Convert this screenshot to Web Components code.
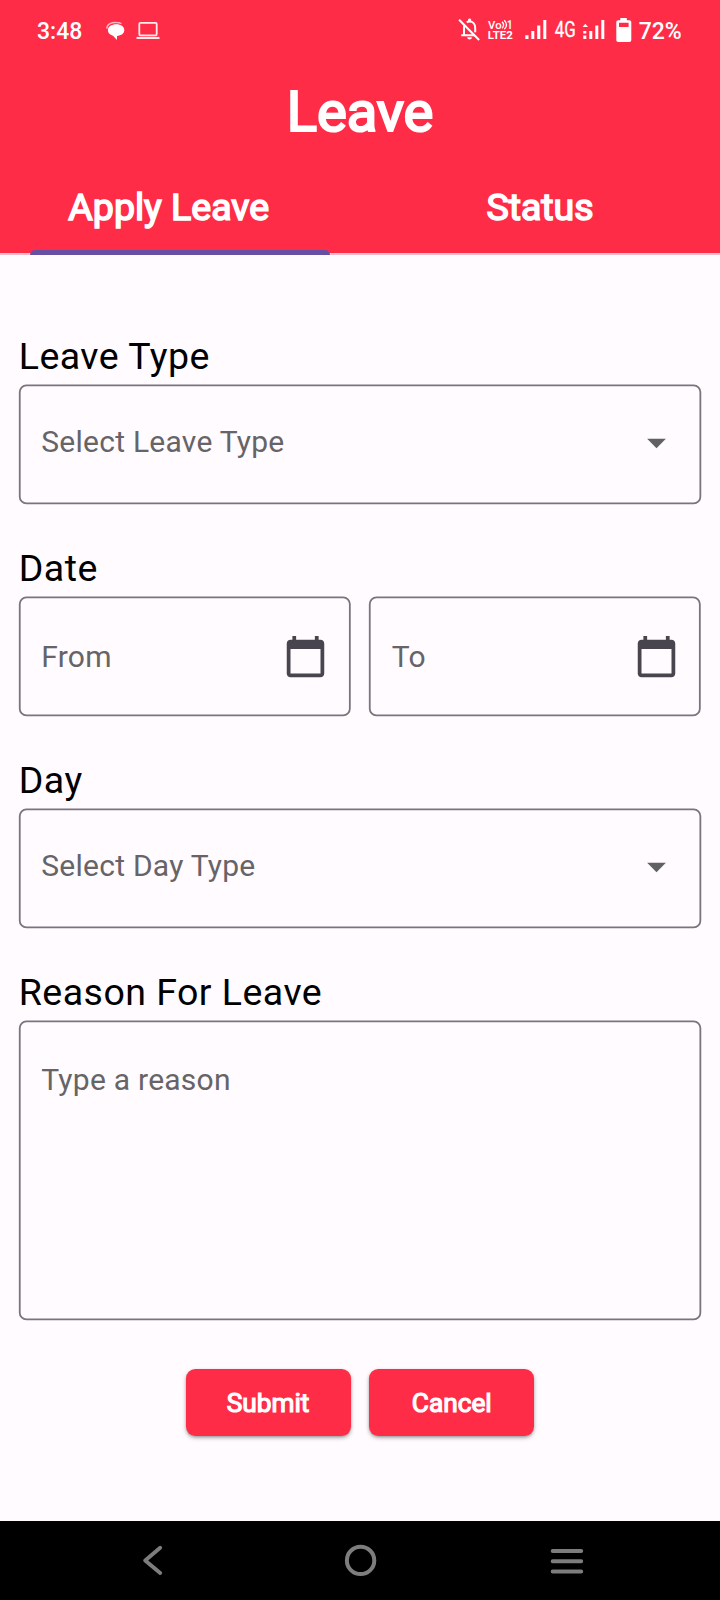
<!DOCTYPE html>
<html lang="en">
<head>
<meta charset="utf-8">
<title>Leave</title>
<style>
html,body{margin:0;padding:0}
body{font-family:Roboto,"Liberation Sans",sans-serif;background:#fffbff}
</style>
</head>
<body>
<leave-app></leave-app>
<script>
const define=(name,html)=>customElements.define(name,class extends HTMLElement{
  constructor(){super();this.attachShadow({mode:'open'}).innerHTML=typeof html==='function'?html(this):html;}
});

define('status-bar',`<style>
:host{display:flex;align-items:center;height:60px;box-sizing:border-box;padding-left:37px;color:#fff;font-size:23px;font-weight:500;line-height:27px}
svg{display:block;flex:none;height:60px}
.time{width:66px;padding-top:2px}
.end{margin-left:auto;display:flex;align-items:center;padding-right:38.3px}
.pct{width:43px;white-space:nowrap;padding-top:2px}
</style>
<span class="time">3:48</span>
<svg width="60" viewBox="103 0 60 60" fill="#fff">
 <path d="M106.8 28.6c.2-4.600 5-6.400 9.600-6.100 2.300 0 4 .6 5 1.300" fill="none" stroke="#fff" stroke-opacity=".65" stroke-width="1.400"/>
 <path d="M116.300 24.300c4.700 0 8 2.200 8 5.800 0 3.600-3.100 5.500-7.300 6v4l-4-4.300c-3.500-.8-5.100-3-5.100-5.700 0-3.600 3.700-5.800 8.400-5.800z"/>
 <rect x="139.300" y="22.900" width="17.400" height="12.400" rx="1" fill="none" stroke="#fff" stroke-opacity=".9" stroke-width="1.800"/>
 <path d="M136.500 36.900h23v2.100h-23z" fill-opacity=".9"/>
</svg>
<div class="end">
<svg width="181" viewBox="457.700 0 181 60" fill="#fff">
 <g fill="none" stroke="#fff" stroke-width="2">
  <path d="M458.800 19.700l20 20.300"/>
  <path d="M463.700 35V28c0-1.200.2-2.300.7-3.200M466.400 22.400c.8-.6 1.700-.9 2.900-.9 3.600 0 5.600 2.900 5.600 6.500v4.300M461 35.200h13.300"/>
 </g>
 <path d="M467.700 21v-1c0-2 3.200-2 3.200 0v1zM467 37.200h4.600c0 3-4.600 3-4.600 0z"/>
 <g font-family="Roboto,sans-serif" font-weight="700">
  <text x="487.800" y="28.500" font-size="11.500" font-weight="500" textLength="13.500" lengthAdjust="spacingAndGlyphs">Vo</text>
  <text x="506.700" y="28.500" font-size="12" textLength="5.500" lengthAdjust="spacingAndGlyphs">1</text>
  <text x="487.500" y="38.900" font-size="11.200" textLength="25" lengthAdjust="spacingAndGlyphs">LTE2</text>
 </g>
 <path d="M501.800 21.700q3 3.300 0 6.600M504 20.200q4.400 4.800 0 9" fill="none" stroke="#fff" stroke-width="1.300"/>
 <path d="M525 35.200h3.200V39H525zM531 31h3v8h-3zM536.900 25.500h3.100V39h-3.100zM543 20h3v19h-3z"/>
 <text x="554.500" y="37.100" font-family="Roboto,sans-serif" font-size="22" font-weight="400" stroke="#fff" stroke-width=".3" textLength="21" lengthAdjust="spacingAndGlyphs">4G</text>
 <path d="M582.300 27l2.700-3.200 2.700 3.200zM583 30.900h3v2.700h-3zM583 35.600h3V39h-3zM589 31h3v8h-3zM595 25.500h3V39h-3zM601 20h3v19h-3z"/>
 <path fill-rule="evenodd" d="M620 18h6.500v2.200h2.500c1.200 0 2 .8 2 2V40c0 1.200-.8 2-2 2h-11c-1.200 0-2-.8-2-2V22.200c0-1.200.8-2 2-2h2zM618.700 22.800V27h9.600v-4.200z"/>
</svg>
<span class="pct">72%</span>
</div>`);

define('tab-item',`<style>
:host{flex:1;display:flex;flex-direction:column;align-items:center;justify-content:space-between;height:70px;box-sizing:border-box;color:#fff;font-size:37.500px;line-height:44px}
span{-webkit-text-stroke:1.600px #fff;padding-right:var(--trail,0px);white-space:nowrap}
i{display:block;width:300px;height:5.500px;border-radius:5px 5px 0 0;background:transparent}
:host([selected]) i{background:#6750a4}
</style><span><slot></slot></span><i></i>`);

define('app-header',`<style>
:host{display:block;height:254.500px;background:linear-gradient(#ff2c48 0 253px,#f6bcc9 253px)}
h1{margin:0;height:105px;line-height:105px;text-align:center;color:#fff;font-size:56.250px;font-weight:400;-webkit-text-stroke:2.200px #fff;letter-spacing:-.1px}
nav{display:flex;padding-top:20px}
</style>
<status-bar></status-bar>
<h1>Leave</h1>
<nav><tab-item selected style="--trail:22.500px">Apply Leave</tab-item><tab-item>Status</tab-item></nav>`);

define('form-group',el=>`<style>
:host{display:flex;flex-direction:column;gap:6.700px}
label{font-size:37.500px;line-height:44px;letter-spacing:.47px;color:#000;white-space:nowrap}
.row{display:flex;gap:18.750px}
</style><label>${el.getAttribute('label')}</label><div class="row"><slot></slot></div>`);

const icons={
  arrow:'<path d="M7 10l5 5 5-5z" fill="#616161"/>',
  calendar:'<path fill="#49454f" d="M20 3h-1V1h-2v2H7V1H5v2H4c-1.100 0-2 .9-2 2v16c0 1.100.9 2 2 2h16c1.100 0 2-.9 2-2V5c0-1.100-.9-2-2-2zm0 18H4V8h16v13z"/>'
};
define('outlined-field',el=>{
  const icon=icons[el.getAttribute('icon')];
  return `<style>
:host{position:relative;flex:1;display:flex;align-items:center;justify-content:space-between;height:119.500px;box-sizing:border-box;padding:0 22.500px;color:#666467;font-size:30px;line-height:35px;letter-spacing:.25px}
:host([icon=arrow]){padding-bottom:4.500px}
:host([icon=arrow]) span{padding-bottom:2px}
:host([multiline]){height:299.500px;align-items:flex-start;padding-top:41px}
.frame{position:absolute;inset:0;width:100%;height:100%;overflow:visible}
.frame rect{width:calc(100% - 1.700px);height:calc(100% - 1.500px)}
.icon{width:45px;height:45px;flex:none}
</style><svg class="frame"><rect x=".75" y=".35" rx="6.700" fill="none" stroke="#79747e" stroke-width="1.800"/></svg>
<span><slot></slot></span>${icon?`<svg class="icon" viewBox="0 0 24 24">${icon}</svg>`:''}`});

define('raised-button',`<style>
:host{display:block;width:165px;box-sizing:border-box}
button{display:block;width:100%;height:67.500px;padding:1px 0 0;margin:0;border:0;border-radius:9.400px;background:#ff2c48;color:#fff;font:400 26.250px/31px Roboto,sans-serif;-webkit-text-stroke:1.200px #fff;box-shadow:0 2px 4px rgba(0,0,0,.3),0 1px 2px rgba(0,0,0,.15)}
</style><button><slot></slot></button>`);

define('nav-bar',`<style>
:host{display:flex;height:79px;background:#000;padding:0 50px;box-sizing:border-box}
svg{flex:1;height:79px;width:0}
</style>
<svg viewBox="50 1521 206.700 79" fill="none" stroke="#7d7d7d" stroke-width="3.900" stroke-linecap="round" stroke-linejoin="round"><path d="M160.200 1547.800l-15 12.600 15 12.600"/></svg>
<svg viewBox="256.700 1521 206.700 79" fill="none" stroke="#7d7d7d" stroke-width="4"><circle cx="360.300" cy="1560.400" r="13.700"/></svg>
<svg viewBox="463.300 1521 206.700 79" fill="none" stroke="#7d7d7d" stroke-width="4" stroke-linecap="round"><path d="M553 1551h28.500M553 1561.200h28.500M553 1571.500h28.500"/></svg>`);

define('leave-form',`<style>
:host{display:flex;flex-direction:column;gap:41.800px;padding:79.700px 18.950px 0 18.750px}
.actions{display:flex;justify-content:center;gap:18.750px;padding-top:6.700px}
</style>
<form-group label="Leave Type"><outlined-field icon="arrow">Select Leave Type</outlined-field></form-group>
<form-group label="Date"><outlined-field icon="calendar">From</outlined-field><outlined-field icon="calendar">To</outlined-field></form-group>
<form-group label="Day"><outlined-field icon="arrow">Select Day Type</outlined-field></form-group>
<form-group label="Reason For Leave"><outlined-field multiline>Type a reason</outlined-field></form-group>
<div class="actions"><raised-button>Submit</raised-button><raised-button>Cancel</raised-button></div>`);

define('leave-app',`<style>
:host{display:flex;flex-direction:column;width:720px;height:1600px;overflow:hidden;background:#fffbff}
leave-form{flex:1}
</style><app-header></app-header><leave-form></leave-form><nav-bar></nav-bar>`);
</script>
</body>
</html>
